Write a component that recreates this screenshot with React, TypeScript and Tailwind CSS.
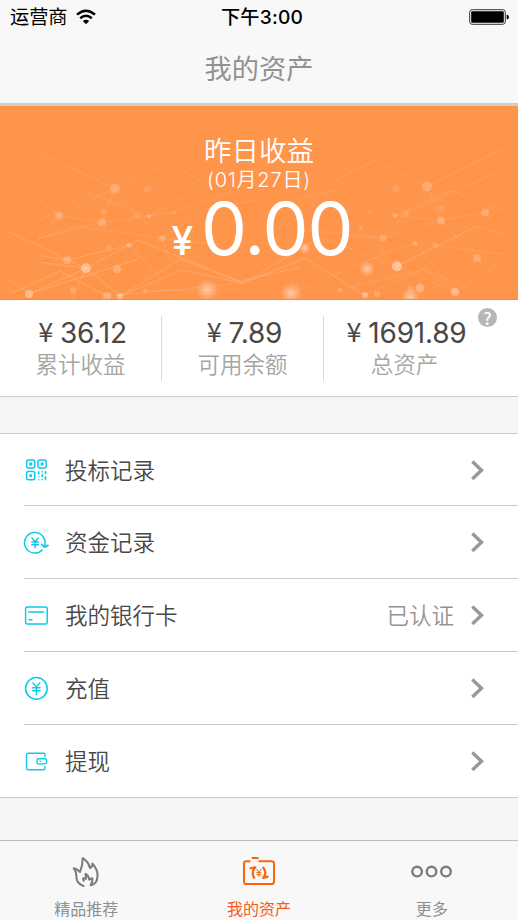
import React from 'react';

const CJK = "font-['Noto_Sans_CJK_SC',sans-serif]";
const LATIN = "font-['Inter','Noto_Sans_CJK_SC',sans-serif]";

const links = [
  '37,152 115,189 168,163 205,184', '102,223 115,189 137,216 162,239 170,262',
  '38,222 88,193 149,217 205,184', '59,216 102,223 174,213 240,190', '38,200 59,216 38,239 78,227 162,239 240,248',
  '59,216 115,189', '102,223 67,261', '102,223 38,239', '8,232 86,269 138,241 240,282 300,268', '86,269 72,300',
  '9,280 29,295 86,269 120,297', '10,295 60,272 107,297', '29,295 138,260', '67,261 129,246 162,280',
  '120,297 180,260 243,284 305,259 365,296', '38,263 86,269', '38,256 67,261', '120,297 182,271 243,284 320,238',
  '107,297 243,284', '145,292 240,290', '162,239 205,210 260,200', '240,248 300,218 335,180 375,161 427,187 503,149',
  '427,187 441,221 477,259 503,285', '335,180 395,216 441,221 485,213 503,201', '280,203 335,191 361,229 397,267',
  '395,216 451,191 503,211', '485,213 503,235 477,227 397,267', '441,221 383,239 300,230', '383,239 406,214 503,170',
  '320,238 397,267 411,290 425,300', '397,267 477,227', '397,267 455,293 503,262', '455,293 424,270 365,296',
  '415,244 455,293', '415,244 383,255 291,294', '340,291 424,270 477,293', '435,246 503,255',
];
const nodes = [
  [115, 189, 5, 0.2], [147, 190, 3.5, 0.12], [59, 216, 4, 0.2], [102, 223, 4, 0.2], [103, 212, 3, 0.12], [86, 269, 5, 0.38],
  [117, 270, 4, 0.24], [67, 261, 4, 0.2], [29, 295, 4, 0.36], [73, 291, 3, 0.2], [107, 297, 4, 0.25], [120, 297, 3, 0.35],
  [145, 292, 2, 0.18], [162, 239, 3.5, 0.18], [129, 246, 2.5, 0.25], [109, 248, 3, 0.12], [149, 217, 2.2, 0.22], [137, 216, 3, 0.12],
  [174, 213, 2, 0.12], [427, 187, 5, 0.2], [396, 189, 3.5, 0.12], [485, 213, 4, 0.2], [441, 221, 4, 0.22], [441, 209, 3, 0.12],
  [395, 216, 2.2, 0.22], [406, 214, 3, 0.12], [383, 239, 3.5, 0.2], [361, 229, 2.5, 0.12], [370, 212, 2, 0.12], [415, 244, 2.2, 0.25],
  [435, 246, 3, 0.12], [477, 259, 4, 0.2], [397, 267, 5, 0.4], [420, 289, 4.5, 0.25], [411, 290, 3, 0.15], [455, 293, 4, 0.35],
  [340, 291, 2, 0.2], [365, 296, 3, 0.35], [377, 295, 3, 0.2],
];
const glows = [[207, 291, 11], [291, 294, 11], [367, 270, 8], [410, 298, 9], [305, 249, 6]];

function Constellation() {
  return (
    <svg className="absolute inset-0 h-full w-full" viewBox="0 106 518 194" preserveAspectRatio="none">
      <defs>
        <radialGradient id="glow">
          <stop offset="0" stopColor="#fff" stopOpacity=".5" />
          <stop offset=".35" stopColor="#fff" stopOpacity=".32" />
          <stop offset="1" stopColor="#fff" stopOpacity="0" />
        </radialGradient>
      </defs>
      {links.map((p, i) => (
        <polyline key={i} points={p} fill="none" stroke="#fff" strokeOpacity={i > 7 && i < 18 ? 0.18 : 0.11} />
      ))}
      {nodes.map(([x, y, r, o], i) => <circle key={i} cx={x} cy={y} r={r} fill="#fff" fillOpacity={o} />)}
      {glows.map(([x, y, r], i) => <circle key={i} cx={x} cy={y} r={r} fill="url(#glow)" />)}
    </svg>
  );
}

const iconProps = {
  width: 26, height: 26, viewBox: '0 0 26 26', fill: 'none', stroke: '#10c8e8', strokeWidth: 1.5,
  strokeLinecap: 'round' as const, strokeLinejoin: 'round' as const,
};

const QrIcon = () => (
  <svg {...iconProps}>
    <rect x="3.6" y="2.9" width="8.2" height="8.2" rx="2" />
    <rect x="15" y="2.9" width="8.2" height="8.2" rx="2" />
    <rect x="3.6" y="14.6" width="8.2" height="8.2" rx="2" />
    <path d="M6.3 7h2.8M17.7 7h2.8M6.3 18.7h2.8" strokeWidth="2.8" strokeLinecap="butt" />
    <path d="M15.7 14.2v3.2M15.7 19.3v1M15.7 22.3v1M19.1 14v1.4M19.1 17v3M19.1 22v1.3M22.5 14v3.2M22.5 19.3v4" strokeLinecap="butt" />
  </svg>
);
const RecordsIcon = () => (
  <svg {...iconProps}>
    <path d="M19.2 20.9A10.3 10.3 0 1 1 21.8 16.2" />
    <path d="M18.8 15.4l2.8 2.7 3.3-1.7" strokeWidth="1.9" />
    <path d="M9 9l3.1 3.7 3.1-3.7M12.1 12.7v6M8.8 13h6.6M8.8 15.7h6.6" />
  </svg>
);
const CardIcon = () => (
  <svg {...iconProps}>
    <rect x="2.6" y="4.9" width="21.6" height="17.2" rx="1.6" />
    <path d="M5.6 10.1h15M6 17.8h3" />
  </svg>
);
const YuanIcon = () => (
  <svg {...iconProps}>
    <circle cx="13.4" cy="13.4" r="10.8" />
    <path d="M10 7.9l3.4 4.2 3.4-4.2M13.4 12.1v7.5M9.7 12.7h7.4M9.7 15.8h7.4" />
  </svg>
);
const WalletIcon = () => (
  <svg {...iconProps} strokeWidth={1.4}>
    <path d="M22 8.4V6.6Q22 5.2 20.6 5.2H5.1Q3.5 5.2 3.5 6.8V20.2Q3.5 21.8 5.1 21.8H20.4Q22 21.8 22 20.4V18.6" />
    <rect x="14" y="10.7" width="9.6" height="5.2" rx="1.6" />
    <path d="M17.1 13.3h.3" />
  </svg>
);

const FlameIcon = () => (
  <svg width="28" height="32" viewBox="0 0 28 32" fill="none" stroke="#807b77" strokeWidth="2.1" strokeLinejoin="round" strokeLinecap="round">
    <path d="M11.5 30C6.6 28.3 4.4 25 4.4 20.8C4.3 17.5 3.6 14.4 1.8 12.3Q4.8 12.7 8 16C9.7 11.5 10.8 7 10.7 2.2C14.4 4.5 17 8 18 12Q20.7 10.8 20.5 7.6C24.5 12 26 17 25.4 21C25 25.7 22.5 28.6 18.7 29.2Q20.8 25.5 20.4 22.2L17.2 23.5Q17.1 20 13.6 17.8L14 22.8L11.2 22.2Q10.8 23.6 11.8 24.8" />
  </svg>
);
const AssetIcon = () => (
  <svg width="34" height="32" viewBox="0 0 34 32" fill="none" stroke="#fb640b" strokeWidth="2" strokeLinejoin="round">
    <path d="M8.4 5.2H4.4Q2 5.2 2 7.6V25.4Q2 28 4.6 28H29.4Q32 28 32 25.4V7.6Q32 5.2 29.4 5.2H16.5M9.8 2.1h6.8" />
    <path d="M7.6 12.5L13.4 11.3Q8.4 16.5 12.6 22.6M20.6 11Q25.8 16 21.2 22L26.4 20.4" strokeWidth="2.2" />
    <path d="M14.4 13l2.4 3.2 2.4-3.2M16.8 16v4.6M14.4 16.6h4.8M14.4 18.7h4.8" strokeWidth="1" />
  </svg>
);
const MoreIcon = () => (
  <svg width="42" height="14" viewBox="0 0 42 14" fill="none" stroke="#807b77" strokeWidth="2.4">
    <circle cx="6.1" cy="6.6" r="4.8" /><circle cx="20.5" cy="6.6" r="4.8" /><circle cx="35" cy="6.6" r="4.8" />
  </svg>
);

const rows = [
  { icon: <QrIcon />, label: '投标记录' },
  { icon: <RecordsIcon />, label: '资金记录' },
  { icon: <CardIcon />, label: '我的银行卡', value: '已认证' },
  { icon: <YuanIcon />, label: '充值' },
  { icon: <WalletIcon />, label: '提现' },
];

function Stat({ amount, label, className }: { amount: string; label: string; className: string }) {
  return (
    <div className={`flex flex-col items-center pt-[2px] ${className}`}>
      <div className={`ml-[4px] flex h-[30px] items-center text-[28px] leading-[30px] tracking-[-0.2px] text-[#4a4744] ${LATIN}`}>
        <span className={`mr-[7px] h-[30px] text-[27px] leading-[26px] ${CJK}`}>¥</span>{amount}
      </div>
      <div className="h-[30px] text-[22.5px] leading-[30px] font-[350] text-[#a5a5a3]">{label}</div>
    </div>
  );
}

export default function App() {
  return (
    <div className={`flex h-[920px] w-[518px] flex-col overflow-hidden bg-[#f5f5f3] ${CJK}`}>
      <header className="h-[106px] border-b-[3px] border-[#cfcfcf] bg-[#f8f8f8]">
        <div className="grid h-[33px] grid-cols-3 items-center pr-[9px] pl-[10px] text-[19.2px] text-black">
          <div className="flex items-center gap-[8px] leading-[33px]">
            <span className="pb-[2px] leading-[31px]">运营商</span>
            <svg width="20" height="16" viewBox="0 0 20 16" fill="none" stroke="#000" strokeWidth="2.5">
              <path d="M1 5.6Q10-2.2 19 5.6M4.2 9.2Q10 4.4 15.8 9.2" /><path d="M6.8 12Q10 9.5 13.2 12L10 15.3z" fill="#000" stroke="none" />
            </svg>
          </div>
          <div className={`ml-[5px] pt-[1px] text-center leading-[33px] font-medium tracking-[0.2px] whitespace-nowrap ${LATIN}`}>下午3:00</div>
          <svg className="justify-self-end" width="40" height="16" viewBox="0 0 40 16">
            <rect x=".7" y=".7" width="35.6" height="14.6" rx="2.6" fill="none" stroke="#333" />
            <rect x="2.2" y="2.2" width="32.6" height="11.6" rx="1.2" /><path d="M37.7 5.4Q40 6 40 8T37.7 10.6z" />
          </svg>
        </div>
        <h1 className="text-center text-[27.2px] leading-[69px] text-[#929292]">我的资产</h1>
      </header>

      <section className="relative h-[194px] shrink-0 border-b border-[#ff873a] bg-[#ff944b] text-white">
        <Constellation />
        <div className="relative flex flex-col items-center pt-[29px]">
          <div className="h-[28px] text-[27.5px] leading-[28px] font-[350]">昨日收益</div>
          <div className={`mt-[7px] h-[20px] text-[20px] leading-[20px] font-[350] tracking-[0.8px] ${LATIN}`}>(01月27日)</div>
          <div className={`mt-[4px] mr-[-6px] flex h-[70px] items-baseline leading-[70px] ${LATIN}`}>
            <span className="mr-[8px] text-[39px] font-medium">¥</span>
            <span className="text-[73px] tracking-[-1px]">0.00</span>
          </div>
        </div>
      </section>

      <section className="relative flex h-[97px] shrink-0 border-b border-[#cbcbcb] bg-white pt-[16px]">
        <Stat amount="36.12" label="累计收益" className="w-[161px]" />
        <div className="h-[65px] w-px bg-[#dadada]" />
        <Stat amount="7.89" label="可用余额" className="w-[161px]" />
        <div className="h-[65px] w-px bg-[#dadada]" />
        <Stat amount="1691.89" label="总资产" className="w-[161px]" />
        <div className="absolute top-[8px] right-[21px] flex h-[19px] w-[19px] items-center justify-center rounded-full bg-[#b8b6b5] text-[17px] leading-[19px] font-medium text-white">?</div>
      </section>

      <main className="mt-[36px] h-[365px] shrink-0 border-y border-[#cbcbcb] bg-white">
        {rows.map((row, i) => (
          <div key={row.label} className={`ml-[24px] flex items-center pr-[34px] ${i === 4 ? 'h-[72px]' : 'border-b border-[#cbcbcb]'} ${i === 0 ? 'h-[72px]' : i < 4 ? 'h-[73px]' : ''}`}>
            <div className="-ml-px w-[42px]">{row.icon}</div>
            <span className="grow pb-[2px] text-[22.5px] leading-[32px] font-[350] text-[#484848]">{row.label}</span>
            {row.value && <span className="mr-[17px] pb-[2px] text-[22.5px] leading-[32px] font-[350] text-[#949494]">{row.value}</span>}
            <svg width="13" height="20" viewBox="0 0 13 20" fill="none" stroke="#999" strokeWidth="3.4"><path d="M1.3 1.6L10.5 10.3L1.3 19" /></svg>
          </div>
        ))}
      </main>

      <nav className="mt-auto grid h-[80px] shrink-0 grid-cols-3 border-t border-[#bdbdbd] bg-[#f8f8f8] text-[16px] text-[#8f8f8f]">
        <div className="flex flex-col items-center pt-[14px]">
          <div className="flex h-[34px] items-center"><FlameIcon /></div>
          <span className="mt-[7px] leading-[24px]">精品推荐</span>
        </div>
        <div className="flex flex-col items-center pt-[14px] text-[#fb5a1c]">
          <div className="flex h-[34px] items-center"><AssetIcon /></div>
          <span className="mt-[7px] leading-[24px]">我的资产</span>
        </div>
        <div className="flex flex-col items-center pt-[14px]">
          <div className="flex h-[34px] items-center"><MoreIcon /></div>
          <span className="mt-[7px] leading-[24px]">更多</span>
        </div>
      </nav>
    </div>
  );
}
